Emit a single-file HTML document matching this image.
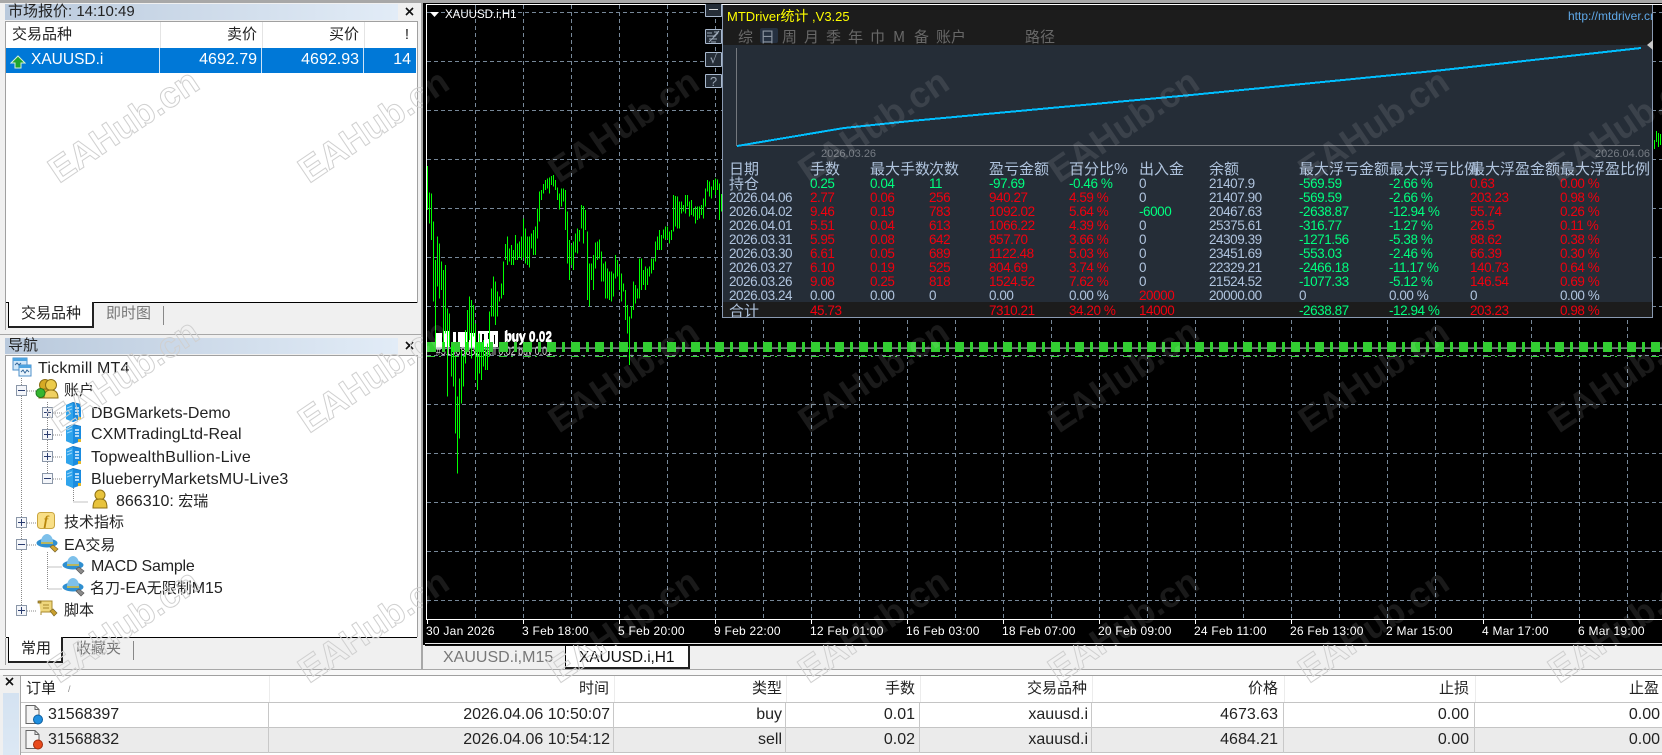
<!DOCTYPE html>
<html lang="zh">
<head>
<meta charset="utf-8">
<title>MT4</title>
<style>
html,body{margin:0;padding:0}
body{position:relative;width:1662px;height:755px;overflow:hidden;background:#f0f0f0;font-family:"Liberation Sans","Noto Sans CJK SC",sans-serif;font-size:16px;color:#222}
div,span,svg{box-sizing:border-box}
.a{position:absolute}
.t{position:absolute;white-space:nowrap;line-height:20px;height:20px}
.cj{font-size:15px}
.gray{color:#777}
.x{position:absolute;width:11px;height:11px}
.tab{position:absolute;background:#fff;border:1px solid #000;border-top:0;border-bottom:2px solid #222;border-right:2px solid #222}
#chart{position:absolute;left:423px;top:3px;width:1239px;height:642px;background:#000;overflow:hidden}
.lb{position:absolute;top:620px;color:#fff;font-size:12px;letter-spacing:.25px;line-height:16px;white-space:nowrap}
#panel{position:absolute;left:722px;top:5px;width:931px;height:313px;background:#252d37;border:1px solid #8a9ab2;border-top:0;overflow:hidden;color:#b0c4de;font-size:13.5px;letter-spacing:-.45px}
#panel .r{position:absolute;left:-722px;width:1700px;height:14px;line-height:14px}
#panel .r span{position:absolute;white-space:nowrap}
.c1{left:728px}.c2{left:809px}.c3{left:869px}.c4{left:928px}.c5{left:988px}.c6{left:1068px}.c7{left:1138px}.c8{left:1208px}.c9{left:1298px}.c10{left:1388px}.c11{left:1469px}.c12{left:1559px}
.g{color:#00ff7f}.d{color:#f0000f}
.h span,.cn{font-family:"WenQuanYi Zen Hei","Noto Sans CJK SC",sans-serif;font-size:15px;letter-spacing:0}
.pbtn{position:absolute;left:705px;width:17px;height:15px;background:#252d37;border:1px solid #a9b9ce;border-radius:1px;color:#9aa6b5;font-size:12px;line-height:13px;text-align:center}
.vl{position:absolute;background:#c8c8c8;width:1px}
.hl{position:absolute;background:#c4c4c4;height:1px;left:21px;width:1641px}
</style>
</head>
<body>
<!-- top strip -->
<div class="a" style="left:0;top:0;width:1662px;height:3px;background:#a8a8a8"></div>
<div class="a" style="left:421px;top:3px;width:2px;height:667px;background:#a8a8a8"></div>

<!-- MARKET WATCH -->
<div class="a" style="left:5px;top:4px;width:393px;height:16px;background:linear-gradient(90deg,#b9c9dc,#e2ecf7)"></div>
<div class="t" style="left:8px;top:2px;font-size:15px">市场报价: 14:10:49</div>
<svg class="x" style="left:404px;top:6px" viewBox="0 0 11 11"><path d="M2 2l7 7M9 2l-7 7" stroke="#111" stroke-width="1.6" fill="none"/></svg>
<div class="a" style="left:5px;top:21px;width:413px;height:282px;background:#fff;border:1px solid #a0a0a0;border-bottom:0"></div>
<div class="t cj" style="left:12px;top:25px">交易品种</div>
<div class="t cj" style="right:1405px;top:25px">卖价</div>
<div class="t cj" style="right:1303px;top:25px">买价</div>
<div class="t cj" style="right:1253px;top:25px">!</div>
<div class="a" style="left:160px;top:22px;width:1px;height:26px;background:#e4e4e4"></div>
<div class="a" style="left:262px;top:22px;width:1px;height:26px;background:#e4e4e4"></div>
<div class="a" style="left:364px;top:22px;width:1px;height:26px;background:#e4e4e4"></div>
<div class="a" style="left:6px;top:48px;width:410px;height:25px;background:#0078d7"></div>
<div class="a" style="left:159px;top:48px;width:1px;height:25px;background:#cfe3f6"></div>
<div class="a" style="left:261px;top:48px;width:1px;height:25px;background:#cfe3f6"></div>
<div class="a" style="left:363px;top:48px;width:1px;height:25px;background:#cfe3f6"></div>
<svg class="a" style="left:10px;top:55px" width="16" height="14" viewBox="0 0 16 14"><path d="M8 1L15 8H11V13H5V8H1Z" fill="#1fa52c" stroke="#d8f0d8" stroke-width="1"/></svg>
<div class="t" style="left:31px;top:50px;color:#fff;font-size:15.5px">XAUUSD.i</div>
<div class="t" style="right:1405px;top:50px;color:#fff">4692.79</div>
<div class="t" style="right:1303px;top:50px;color:#fff">4692.93</div>
<div class="t" style="right:1251px;top:50px;color:#fff">14</div>
<!-- MW tabs -->
<div class="a" style="left:6px;top:302px;width:411px;height:1px;background:#000"></div>
<div class="a" style="left:5px;top:303px;width:1px;height:27px;background:#a0a0a0"></div>
<div class="tab" style="left:8px;top:302px;width:86px;height:26px"></div>
<div class="t cj" style="left:21px;top:304px">交易品种</div>
<div class="t cj gray" style="left:106px;top:304px">即时图</div>
<div class="a" style="left:163px;top:306px;width:1px;height:19px;background:#888"></div>
<div class="a" style="left:0;top:334px;width:421px;height:1px;background:#a8a8a8"></div>

<!-- NAVIGATOR -->
<div class="a" style="left:5px;top:338px;width:393px;height:16px;background:linear-gradient(90deg,#b9c9dc,#e2ecf7)"></div>
<div class="t" style="left:8px;top:336px;font-size:15px">导航</div>
<svg class="x" style="left:404px;top:340px" viewBox="0 0 11 11"><path d="M2 2l7 7M9 2l-7 7" stroke="#111" stroke-width="1.6" fill="none"/></svg>
<div class="a" style="left:5px;top:355px;width:413px;height:282px;background:#fff;border:1px solid #a0a0a0;border-bottom:0"></div>

<svg class="a" style="left:0;top:0" width="420" height="640" viewBox="0 0 420 640">
<defs>
<g id="srv"><path d="M0 3L7 0L15 2V17L7 20L0 17Z" fill="#1272bd"/><path d="M0 3L7 1V20L0 17Z" fill="#2fa4ec"/><path d="M7 1L15 2.500V17L7 20Z" fill="#1a8ce0"/><path d="M1 6L6 4M1 9L6 7" stroke="#9ed6fb"/><path d="M9 6h4M9 9h4M9 12h4" stroke="#e2f4ff" stroke-width="1.4"/><path d="M12 15h3v3h-3z" fill="#e5b92c"/></g>
<g id="hat"><ellipse cx="10" cy="9" rx="10.500" ry="4.500" fill="#2f8fd0"/><path d="M4 8C4 2 8 0 10 0S16 2 16 8Z" fill="#7dc0ea"/><path d="M4 9h12" stroke="#e5c33a" stroke-width="1.5"/><path d="M13 13l3-2 5 4-3 3z" fill="#d3a52f" stroke="#77632b" stroke-width=".7"/></g>
<g id="hat2"><ellipse cx="10" cy="9" rx="10.500" ry="4.500" fill="#2f8fd0"/><path d="M4 8C4 2 8 0 10 0S16 2 16 8Z" fill="#7dc0ea"/><path d="M4 9h12" stroke="#e5c33a" stroke-width="1.5"/><path d="M13 13l3-2 5 4-3 3z" fill="#8b8b8b" stroke="#555" stroke-width=".7"/></g>
</defs>
<g stroke="#888" stroke-width="1" stroke-dasharray="1 1" fill="none" shape-rendering="crispEdges">
<path d="M21.5 378V612"/><path d="M47.5 402V480"/><path d="M73.5 488V502H88"/><path d="M47.5 552V589H62M47.5 567H62"/>
<path d="M27 391H36M53 413H62M53 435H62M53 457H62M53 479H62M27 523H36M27 545H36M27 611H36"/>
</g>
<g shape-rendering="crispEdges" fill="#f4f6fa" stroke="#8b97a8">
<rect x="16.5" y="385.5" width="10" height="10"/><rect x="42.5" y="407.5" width="10" height="10"/><rect x="42.5" y="429.5" width="10" height="10"/><rect x="42.5" y="451.5" width="10" height="10"/><rect x="42.5" y="473.5" width="10" height="10"/><rect x="16.5" y="517.5" width="10" height="10"/><rect x="16.5" y="539.5" width="10" height="10"/><rect x="16.5" y="605.5" width="10" height="10"/>
</g>
<path shape-rendering="crispEdges" stroke="#2a3c70" fill="none" d="M18 390.5h7M44 412.5h7M47.5 409v7M44 434.5h7M47.5 431v7M44 456.5h7M47.5 453v7M44 478.5h7M18 522.5h7M21.5 519v7M18 544.5h7M18 610.5h7M21.5 607v7"/>
<!-- root icon -->
<g transform="translate(13,358)"><rect x="0" y="0" width="14" height="12" fill="#cfe6f8" stroke="#4c8fc9"/><rect x="0" y="0" width="14" height="3" fill="#4ca3e0"/><rect x="6" y="7" width="12" height="11" fill="#eaf5fd" stroke="#4c8fc9"/><rect x="6" y="7" width="12" height="3" fill="#4ca3e0"/><path d="M8 14l2-2 2 3 2-3 2 2" stroke="#35689b" fill="none"/><path d="M2 7l2-2 2 2 2-2" stroke="#35689b" fill="none"/></g>
<!-- accounts -->
<g transform="translate(36,379)"><circle cx="9" cy="6" r="5.500" fill="#d6aa24" stroke="#8c6f14"/><circle cx="15" cy="6" r="5.500" fill="#eccb4a" stroke="#8c6f14"/><path d="M3 19C3 11 6 10 9 10S16 11 16 19Z" fill="#d4ab2a" stroke="#8c6f14"/><path d="M8 19C8 12 12 11 15 11S22 12 22 19Z" fill="#efd062" stroke="#8c6f14"/><circle cx="4.500" cy="14" r="4.500" fill="#35b52f" stroke="#1f7a1c"/></g>
<use href="#srv" x="66" y="402"/><use href="#srv" x="66" y="424"/><use href="#srv" x="66" y="446"/><use href="#srv" x="66" y="468"/>
<!-- user -->
<g transform="translate(92,490)"><circle cx="8" cy="5" r="5" fill="#e8c33c" stroke="#8c6f14"/><path d="M1 18C1 10 4 9 8 9S15 10 15 18Z" fill="#e8c33c" stroke="#8c6f14"/></g>
<!-- f -->
<g transform="translate(37,512)"><rect x=".5" y=".5" width="17" height="16" rx="3" fill="#f9df86" stroke="#c9a540"/><text x="9" y="13" text-anchor="middle" font-family="Liberation Serif,serif" font-style="italic" font-weight="bold" font-size="14" fill="#b8860b">f</text></g>
<use href="#hat" x="37" y="534"/>
<use href="#hat2" x="63" y="556"/><use href="#hat2" x="63" y="578"/>
<!-- script -->
<g transform="translate(37,600)"><path d="M2 1H15V12H4V15" fill="#efd77d" stroke="#a98a2c"/><path d="M1 1h3v2H1zM13 11l3-2 4 4-3 3z" fill="#c99f2f" stroke="#7d6722" stroke-width=".7"/><path d="M6 5h6M6 8h6" stroke="#a98a2c"/></g>
</svg>
<div class="t" style="left:38px;top:359px;letter-spacing:.2px">Tickmill MT4</div>
<div class="t cj" style="left:64px;top:381px">账户</div>
<div class="t" style="left:91px;top:404px">DBGMarkets-Demo</div>
<div class="t" style="left:91px;top:425px;letter-spacing:.05px">CXMTradingLtd-Real</div>
<div class="t" style="left:91px;top:448px;letter-spacing:.25px">TopwealthBullion-Live</div>
<div class="t" style="left:91px;top:470px;letter-spacing:.15px">BlueberryMarketsMU-Live3</div>
<div class="t" style="left:116px;top:492px">866310: <span class="cj">宏瑞</span></div>
<div class="t cj" style="left:64px;top:513px">技术指标</div>
<div class="t" style="left:64px;top:536px">EA<span class="cj">交易</span></div>
<div class="t" style="left:91px;top:557px;letter-spacing:-.2px">MACD Sample</div>
<div class="t" style="left:90px;top:579px"><span class="cj">名刀</span>-EA<span class="cj">无限制</span>M15</div>
<div class="t cj" style="left:64px;top:601px">脚本</div>
<!-- Nav tabs -->
<div class="a" style="left:6px;top:637px;width:411px;height:1px;background:#000"></div>
<div class="a" style="left:5px;top:638px;width:1px;height:27px;background:#a0a0a0"></div>
<div class="tab" style="left:8px;top:637px;width:55px;height:26px"></div>
<div class="t cj" style="left:21px;top:639px">常用</div>
<div class="t cj gray" style="left:76px;top:639px">收藏夹</div>
<div class="a" style="left:133px;top:641px;width:1px;height:19px;background:#888"></div>
<div class="a" style="left:0;top:669px;width:425px;height:1px;background:#a8a8a8"></div>

<!-- CHART -->
<div id="chart"></div>
<div class="a" style="left:426px;top:4px;width:1236px;height:1px;background:#fff"></div>
<div class="a" style="left:426px;top:4px;width:1px;height:616px;background:#fff"></div>
<div class="a" style="left:426px;top:619px;width:1236px;height:1px;background:#fff"></div>
<div class="a" style="left:425px;top:643px;width:1237px;height:1px;background:#e8e8e8"></div>
<svg class="a" style="left:0;top:0" width="1662" height="755" viewBox="0 0 1662 755">
<defs><pattern id="sq" x="427" y="342" width="24" height="10" patternUnits="userSpaceOnUse"><rect x="0" y="0" width="9" height="10" fill="#32cd32"/><rect x="15" y="0" width="3" height="10" fill="#32cd32"/></pattern></defs>
<g stroke="#778899" stroke-dasharray="4 3" shape-rendering="crispEdges" fill="none">
<path d="M427 12.5H1662M427 61.5H1662M427 110.5H1662M427 159.5H1662M427 208.5H1662M427 257.5H1662M427 306.5H1662M427 404.5H1662M427 453.5H1662M427 502.5H1662M427 551.5H1662M427 600.5H1662"/>
<path d="M475.5 5V619M523.5 5V619M571.5 5V619M619.5 5V619M667.5 5V619M715.5 5V619M763.5 5V619M811.5 5V619M859.5 5V619M907.5 5V619M955.5 5V619M1003.5 5V619M1051.5 5V619M1099.5 5V619M1147.5 5V619M1195.5 5V619M1243.5 5V619M1291.5 5V619M1339.5 5V619M1387.5 5V619M1435.5 5V619M1483.5 5V619M1531.5 5V619M1579.5 5V619M1627.5 5V619"/>
</g>
<path stroke="#fff" shape-rendering="crispEdges" d="M427.5 619V624M523.5 619V624M619.5 619V624M715.5 619V624M811.5 619V624M907.5 619V624M1003.5 619V624M1099.5 619V624M1195.5 619V624M1291.5 619V624M1387.5 619V624M1483.5 619V624M1579.5 619V624"/>
<g fill="#fff" shape-rendering="crispEdges">
<rect x="436" y="333" width="6" height="16"/><rect x="443" y="331" width="7" height="16"/><rect x="453" y="332" width="3" height="15"/><rect x="458" y="332" width="9" height="15"/><rect x="469" y="333" width="6" height="15"/><rect x="478" y="331" width="20" height="16"/>
</g>
<g fill="#000" shape-rendering="crispEdges"><rect x="482" y="334" width="2" height="8"/><rect x="488" y="333" width="2" height="6"/><rect x="494" y="335" width="1" height="9"/></g>
<g fill="#fff" font-family="Liberation Sans,sans-serif" font-size="15" font-weight="bold">
<text x="504" y="342" textLength="48" lengthAdjust="spacingAndGlyphs">buy 0.02</text>
<text x="505" y="341" textLength="47" lengthAdjust="spacingAndGlyphs">buy 0.02</text>
</g>
<text x="436" y="355" fill="#ddd" font-family="Liberation Sans,sans-serif" font-size="12" textLength="116" lengthAdjust="spacingAndGlyphs">#31568832 sell 0.02 buy 0.01</text>
<rect x="427" y="347.5" width="1235" height="1.2" fill="#aab"/>
<rect x="427" y="342" width="1235" height="10" fill="url(#sq)"/>
<path d="M427 356.5H1662" stroke="#32cd32" stroke-dasharray="8 4 2 10" shape-rendering="crispEdges"/>
<path d="M427 355.5H1662" stroke="#778899" stroke-dasharray="4 3" shape-rendering="crispEdges"/>
<path d="M430 12h9l-4.500 5z" fill="#fff"/>
</svg>
<svg class="a" style="left:425px;top:170px;overflow:visible" width="300" height="320" viewBox="0 0 900 960">
<path fill="none" stroke="#00ff00" stroke-width="3" shape-rendering="crispEdges" d="M7.500 -12V120M13.500 68V160M19.500 70V210M25.500 155V395M31.500 270V520M37.500 200V350M43.500 220V385M49.500 275V360M55.500 300V530M61.500 285V490M67.500 415V680M73.500 430V530M79.500 530V620M85.500 530V650M91.500 560V790M97.500 680V910M103.500 625V805M109.500 540V700M115.500 560V650M121.500 480V580M127.500 420V540M133.500 380V510M139.500 390V565M145.500 405V500M151.500 460V630M157.500 520V660M163.500 490V610M169.500 520V630M175.500 510V590M181.500 530V600M187.500 520V600M193.500 425V560M199.500 355V440M205.500 320V440M211.500 335V465M217.500 365V440M223.500 380V395M229.500 340V385M235.500 275V375M241.500 222V270M247.500 200V285M253.500 235V275M259.500 225V285M265.500 240V285M271.500 195V270M277.500 220V270M283.500 215V262M289.500 200V270M295.500 145V262M301.500 175V280M307.500 200V285M313.500 200V292M319.500 190V235M325.500 180V255M331.500 170V255M337.500 115V205M343.500 65V155M349.500 60V90M355.500 42V70M361.500 30V60M367.500 25V55M373.500 22V70M379.500 18V45M385.500 15V50M391.500 30V60M397.500 52V90M403.500 70V118M409.500 55V110M415.500 55V95M421.500 60V180M427.500 125V280M433.500 210V330M439.500 225V285M445.500 215V300M451.500 190V248M457.500 175V250M463.500 180V215M469.500 105V175M475.500 108V220M481.500 120V180M487.500 185V390M493.500 280V410M499.500 280V330M505.500 255V360M511.500 218V295M517.500 215V270M523.500 208V265M529.500 245V335M535.500 280V335M541.500 275V385M547.500 295V385M553.500 305V390M559.500 305V395M565.500 310V380M571.500 255V325M577.500 270V320M583.500 290V360M589.500 310V395M595.500 340V365M601.500 360V450M607.500 405V490M613.500 440V585M619.500 410V445M625.500 335V420M631.500 345V400M637.500 355V385M643.500 265V385M649.500 265V360M655.500 300V345M661.500 290V360M667.500 295V345M673.500 290V320M679.500 265V310M685.500 265V300M691.500 215V275M697.500 200V240M703.500 180V240M709.500 195V240M715.500 178V205M721.500 170V210M727.500 170V205M733.500 185V220M739.500 180V210M745.500 75V185M751.500 78V170M757.500 80V175M763.500 95V175M769.500 95V130M775.500 105V125M781.500 75V130M787.500 75V110M793.500 95V140M799.500 90V135M805.500 115V140M811.500 110V160M817.500 110V150M823.500 110V145M829.500 105V135M835.500 85V145M841.500 55V110M847.500 30V65M853.500 35V80M859.500 50V85M865.500 30V60M871.500 25V75M877.500 28V60M883.500 40V150M889.500 72V125"/>
</svg>
<svg class="a" style="left:1653px;top:125px" width="9" height="30" viewBox="0 0 9 30"><path stroke="#00ff00" shape-rendering="crispEdges" d="M1.500 15V24M3.500 6V17M5.500 8V22M7.500 9V20"/></svg>
<div class="t" style="left:445px;top:5px;color:#fff;font-size:11.5px">XAUUSD.i,H1</div>

<!-- side buttons -->
<div class="pbtn" style="top:4px;height:13px;border-top:0"><span class="a" style="left:3px;top:5px;width:9px;height:1px;background:#ddd"></span></div>
<div class="pbtn" style="top:29px"><svg width="15" height="13" viewBox="0 0 15 13" style="display:block"><path d="M1 3h5M1 6h9M3 9h8M5 12h5M8 2l5 0M7 7l6-6M3 12l9-9" stroke="#9aa6b5" fill="none"/></svg></div>
<div class="pbtn" style="top:52px;font-family:'DejaVu Sans',sans-serif">√</div>
<div class="pbtn" style="top:74px;font-size:13px;height:14px">?</div>

<!-- STATS PANEL -->
<div id="panel">
<div class="a" style="left:0;top:0;width:930px;height:40px;background:#1c1c1c"></div>
<div class="a" style="left:0;top:297px;width:930px;height:15px;background:#1c1c1c"></div>
<div class="a" style="left:37px;top:23px;width:18px;height:15px;background:#253040;border-radius:2px"></div>
<div class="a" style="left:4px;top:3px;color:#ffff00;font-size:13px;letter-spacing:0;line-height:16px;white-space:nowrap">MTDriver<span class="cn" style="font-size:14px">统计</span> ,V3.25</div>
<div class="a" style="left:845px;top:3px;color:#5fa8e8;font-size:12px;letter-spacing:0;line-height:16px;white-space:nowrap">http://mtdriver.cn</div>
<div class="a cn" style="left:15px;top:24px;color:#686868;line-height:16px">综</div>
<div class="a cn" style="left:37px;top:24px;color:#8a93a0;line-height:16px">日</div>
<div class="a cn" style="left:59px;top:24px;color:#686868;line-height:16px">周</div>
<div class="a cn" style="left:81px;top:24px;color:#686868;line-height:16px">月</div>
<div class="a cn" style="left:103px;top:24px;color:#686868;line-height:16px">季</div>
<div class="a cn" style="left:125px;top:24px;color:#686868;line-height:16px">年</div>
<div class="a cn" style="left:147px;top:24px;color:#686868;line-height:16px">巾</div>
<div class="a cn" style="left:170px;top:24px;color:#686868;line-height:16px">M</div>
<div class="a cn" style="left:191px;top:24px;color:#686868;line-height:16px">备</div>
<div class="a cn" style="left:213px;top:24px;color:#686868;line-height:16px">账户</div>
<div class="a cn" style="left:302px;top:24px;color:#686868;line-height:16px">路径</div>
<svg class="a" style="left:-722px;top:-5px" width="1662" height="200" viewBox="0 0 1662 200">
<path d="M735.500 48V145.500H1639" fill="none" stroke="#74787e" shape-rendering="crispEdges"/>
<polyline points="736,146 843,128 910,121 1190,95 1433,71 1640,48" fill="none" stroke="#00bfff" stroke-width="2" shape-rendering="crispEdges"/>
<text x="820" y="157" font-family="Liberation Sans,sans-serif" font-size="11" letter-spacing="0" fill="#757b83">2026.03.26</text>
<text x="1594" y="157" font-family="Liberation Sans,sans-serif" font-size="11" letter-spacing="0" fill="#757b83">2026.04.06</text>
</svg>
<div class="r h" style="top:157px"><span class="c1">日期</span><span class="c2">手数</span><span class="c3">最大手数</span><span class="c4">次数</span><span class="c5">盈亏金额</span><span class="c6">百分比%</span><span class="c7">出入金</span><span class="c8">余额</span><span class="c9">最大浮亏金额</span><span class="c10">最大浮亏比例</span><span class="c11">最大浮盈金额</span><span class="c12">最大浮盈比例</span></div>
<div class="r" style="top:172px"><span class="c1 cn">持仓</span><span class="c2 g">0.25</span><span class="c3 g">0.04</span><span class="c4 g">11</span><span class="c5 g">-97.69</span><span class="c6 g">-0.46 %</span><span class="c7">0</span><span class="c8">21407.9</span><span class="c9 g">-569.59</span><span class="c10 g">-2.66 %</span><span class="c11 d">0.63</span><span class="c12 d">0.00 %</span></div>
<div class="r" style="top:186px"><span class="c1">2026.04.06</span><span class="c2 d">2.77</span><span class="c3 d">0.06</span><span class="c4 d">256</span><span class="c5 d">940.27</span><span class="c6 d">4.59 %</span><span class="c7">0</span><span class="c8">21407.90</span><span class="c9 g">-569.59</span><span class="c10 g">-2.66 %</span><span class="c11 d">203.23</span><span class="c12 d">0.98 %</span></div>
<div class="r" style="top:200px"><span class="c1">2026.04.02</span><span class="c2 d">9.46</span><span class="c3 d">0.19</span><span class="c4 d">783</span><span class="c5 d">1092.02</span><span class="c6 d">5.64 %</span><span class="c7 g">-6000</span><span class="c8">20467.63</span><span class="c9 g">-2638.87</span><span class="c10 g">-12.94 %</span><span class="c11 d">55.74</span><span class="c12 d">0.26 %</span></div>
<div class="r" style="top:214px"><span class="c1">2026.04.01</span><span class="c2 d">5.51</span><span class="c3 d">0.04</span><span class="c4 d">613</span><span class="c5 d">1066.22</span><span class="c6 d">4.39 %</span><span class="c7">0</span><span class="c8">25375.61</span><span class="c9 g">-316.77</span><span class="c10 g">-1.27 %</span><span class="c11 d">26.5</span><span class="c12 d">0.11 %</span></div>
<div class="r" style="top:228px"><span class="c1">2026.03.31</span><span class="c2 d">5.95</span><span class="c3 d">0.08</span><span class="c4 d">642</span><span class="c5 d">857.70</span><span class="c6 d">3.66 %</span><span class="c7">0</span><span class="c8">24309.39</span><span class="c9 g">-1271.56</span><span class="c10 g">-5.38 %</span><span class="c11 d">88.62</span><span class="c12 d">0.38 %</span></div>
<div class="r" style="top:242px"><span class="c1">2026.03.30</span><span class="c2 d">6.61</span><span class="c3 d">0.05</span><span class="c4 d">689</span><span class="c5 d">1122.48</span><span class="c6 d">5.03 %</span><span class="c7">0</span><span class="c8">23451.69</span><span class="c9 g">-553.03</span><span class="c10 g">-2.46 %</span><span class="c11 d">66.39</span><span class="c12 d">0.30 %</span></div>
<div class="r" style="top:256px"><span class="c1">2026.03.27</span><span class="c2 d">6.10</span><span class="c3 d">0.19</span><span class="c4 d">525</span><span class="c5 d">804.69</span><span class="c6 d">3.74 %</span><span class="c7">0</span><span class="c8">22329.21</span><span class="c9 g">-2466.18</span><span class="c10 g">-11.17 %</span><span class="c11 d">140.73</span><span class="c12 d">0.64 %</span></div>
<div class="r" style="top:270px"><span class="c1">2026.03.26</span><span class="c2 d">9.08</span><span class="c3 d">0.25</span><span class="c4 d">818</span><span class="c5 d">1524.52</span><span class="c6 d">7.62 %</span><span class="c7">0</span><span class="c8">21524.52</span><span class="c9 g">-1077.33</span><span class="c10 g">-5.12 %</span><span class="c11 d">146.54</span><span class="c12 d">0.69 %</span></div>
<div class="r" style="top:284px"><span class="c1">2026.03.24</span><span class="c2">0.00</span><span class="c3">0.00</span><span class="c4">0</span><span class="c5">0.00</span><span class="c6">0.00 %</span><span class="c7 d">20000</span><span class="c8">20000.00</span><span class="c9">0</span><span class="c10">0.00 %</span><span class="c11">0</span><span class="c12">0.00 %</span></div>
<div class="r" style="top:299px"><span class="c1 cn">合计</span><span class="c2 d">45.73</span><span class="c5 d">7310.21</span><span class="c6 d">34.20 %</span><span class="c7 d">14000</span><span class="c9 g">-2638.87</span><span class="c10 g">-12.94 %</span><span class="c11 d">203.23</span><span class="c12 d">0.98 %</span></div>
</div>
<svg class="a" style="left:1646px;top:40px" width="7" height="10" viewBox="0 0 7 10"><path d="M7 0V10L1 5Z" fill="#c8c8c8"/></svg>

<!-- time labels -->
<div class="lb" style="left:426px;top:623px">30 Jan 2026</div>
<div class="lb" style="left:522px;top:623px">3 Feb 18:00</div>
<div class="lb" style="left:618px;top:623px">5 Feb 20:00</div>
<div class="lb" style="left:714px;top:623px">9 Feb 22:00</div>
<div class="lb" style="left:810px;top:623px">12 Feb 01:00</div>
<div class="lb" style="left:906px;top:623px">16 Feb 03:00</div>
<div class="lb" style="left:1002px;top:623px">18 Feb 07:00</div>
<div class="lb" style="left:1098px;top:623px">20 Feb 09:00</div>
<div class="lb" style="left:1194px;top:623px">24 Feb 11:00</div>
<div class="lb" style="left:1290px;top:623px">26 Feb 13:00</div>
<div class="lb" style="left:1386px;top:623px">2 Mar 15:00</div>
<div class="lb" style="left:1482px;top:623px">4 Mar 17:00</div>
<div class="lb" style="left:1578px;top:623px">6 Mar 19:00</div>

<!-- chart tabs -->
<div class="a" style="left:425px;top:645px;width:1237px;height:1px;background:#111"></div>
<div class="t gray" style="left:443px;top:648px;font-size:16px">XAUUSD.i,M15</div>
<div class="tab" style="left:565px;top:645px;width:125px;height:24px;border-top:1px solid #000"></div>
<div class="t" style="left:579px;top:648px;font-size:15.500px;letter-spacing:-.1px;color:#111">XAUUSD.i,H1</div>

<!-- TERMINAL -->
<div class="a" style="left:425px;top:669px;width:1237px;height:1px;background:#a8a8a8"></div>
<div class="a" style="left:0;top:670px;width:1662px;height:5px;background:#f8f8f8"></div>
<div class="a" style="left:3px;top:675px;width:1659px;height:1px;background:#a0a0a0"></div>
<div class="a" style="left:3px;top:693px;width:16px;height:62px;background:linear-gradient(180deg,#d4e2f1,#dce8f4)"></div>
<svg class="x" style="left:4px;top:676px" viewBox="0 0 11 11"><path d="M2 2l7 7M9 2l-7 7" stroke="#111" stroke-width="1.6" fill="none"/></svg>
<div class="a" style="left:21px;top:676px;width:1641px;height:79px;background:#fff"></div>
<div class="a" style="left:21px;top:728px;width:1641px;height:25px;background:#ebebeb"></div>
<div class="hl" style="top:702px"></div>
<div class="hl" style="top:727px"></div>
<div class="hl" style="top:752px"></div>
<div class="a" style="left:20px;top:676px;width:1px;height:79px;background:#a8a8a8"></div>
<div class="vl" style="left:269px;top:676px;height:26px;background:#ececec"></div>
<div class="vl" style="left:614px;top:676px;height:26px;background:#ececec"></div>
<div class="vl" style="left:786px;top:676px;height:26px;background:#ececec"></div>
<div class="vl" style="left:920px;top:676px;height:26px;background:#ececec"></div>
<div class="vl" style="left:1092px;top:676px;height:26px;background:#ececec"></div>
<div class="vl" style="left:1284px;top:676px;height:26px;background:#ececec"></div>
<div class="vl" style="left:1475px;top:676px;height:26px;background:#ececec"></div>
<div class="vl" style="left:268px;top:703px;height:50px"></div>
<div class="vl" style="left:613px;top:703px;height:50px"></div>
<div class="vl" style="left:785px;top:703px;height:50px"></div>
<div class="vl" style="left:919px;top:703px;height:50px"></div>
<div class="vl" style="left:1091px;top:703px;height:50px"></div>
<div class="vl" style="left:1283px;top:703px;height:50px"></div>
<div class="vl" style="left:1474px;top:703px;height:50px"></div>
<div class="t cj" style="left:26px;top:679px">订单</div>
<div class="t" style="left:68px;top:679px;font-size:9px;color:#888">/</div>
<div class="t cj" style="right:1053px;top:679px">时间</div>
<div class="t cj" style="right:880px;top:679px">类型</div>
<div class="t cj" style="right:747px;top:679px">手数</div>
<div class="t cj" style="right:575px;top:679px">交易品种</div>
<div class="t cj" style="right:384px;top:679px">价格</div>
<div class="t cj" style="right:193px;top:679px">止损</div>
<div class="t cj" style="right:3px;top:679px">止盈</div>
<svg class="a" style="left:24px;top:705px" width="20" height="20" viewBox="0 0 20 20"><path d="M2 .5H11L15 4.500V18.500H2Z" fill="#f4f4f4" stroke="#666"/><path d="M11 .5V4.500H15" fill="none" stroke="#666"/><circle cx="14" cy="14.500" r="4.500" fill="#1f8fe0" stroke="#0d5f9f"/></svg>
<svg class="a" style="left:24px;top:730px" width="20" height="20" viewBox="0 0 20 20"><path d="M2 .5H11L15 4.500V18.500H2Z" fill="#f4f4f4" stroke="#666"/><path d="M11 .5V4.500H15" fill="none" stroke="#666"/><circle cx="14" cy="14.500" r="4.500" fill="#e84a1c" stroke="#9f2d0d"/></svg>
<div class="t" style="left:48px;top:705px">31568397</div>
<div class="t" style="right:1052px;top:705px">2026.04.06 10:50:07</div>
<div class="t" style="right:880px;top:705px">buy</div>
<div class="t" style="right:747px;top:705px">0.01</div>
<div class="t" style="right:574px;top:705px">xauusd.i</div>
<div class="t" style="right:384px;top:705px">4673.63</div>
<div class="t" style="right:193px;top:705px">0.00</div>
<div class="t" style="right:2px;top:705px">0.00</div>
<div class="t" style="left:48px;top:730px">31568832</div>
<div class="t" style="right:1052px;top:730px">2026.04.06 10:54:12</div>
<div class="t" style="right:880px;top:730px">sell</div>
<div class="t" style="right:747px;top:730px">0.02</div>
<div class="t" style="right:574px;top:730px">xauusd.i</div>
<div class="t" style="right:384px;top:730px">4684.21</div>
<div class="t" style="right:193px;top:730px">0.00</div>
<div class="t" style="right:2px;top:730px">0.00</div>

<!-- WATERMARK -->
<svg class="a" style="left:0;top:0;pointer-events:none" width="1662" height="755" viewBox="0 0 1662 755">
<defs>
<clipPath id="cd"><rect x="427" y="5" width="1235" height="640"/></clipPath>
<clipPath id="cl"><rect x="0" y="0" width="423" height="755"/><rect x="423" y="645" width="1239" height="110"/></clipPath>
</defs>
<g clip-path="url(#cd)" font-family="Liberation Sans,sans-serif" font-weight="bold" font-size="36" text-anchor="middle" fill="#fff" fill-opacity=".1">
<text transform="translate(373,125) rotate(-34)" y="13">EAHub.cn</text><text transform="translate(623,125) rotate(-34)" y="13">EAHub.cn</text><text transform="translate(873,125) rotate(-34)" y="13">EAHub.cn</text><text transform="translate(1123,125) rotate(-34)" y="13">EAHub.cn</text><text transform="translate(1373,125) rotate(-34)" y="13">EAHub.cn</text><text transform="translate(1623,125) rotate(-34)" y="13">EAHub.cn</text>
<text transform="translate(373,375) rotate(-34)" y="13">EAHub.cn</text><text transform="translate(623,375) rotate(-34)" y="13">EAHub.cn</text><text transform="translate(873,375) rotate(-34)" y="13">EAHub.cn</text><text transform="translate(1123,375) rotate(-34)" y="13">EAHub.cn</text><text transform="translate(1373,375) rotate(-34)" y="13">EAHub.cn</text><text transform="translate(1623,375) rotate(-34)" y="13">EAHub.cn</text>
<text transform="translate(373,625) rotate(-34)" y="13">EAHub.cn</text><text transform="translate(623,625) rotate(-34)" y="13">EAHub.cn</text><text transform="translate(873,625) rotate(-34)" y="13">EAHub.cn</text><text transform="translate(1123,625) rotate(-34)" y="13">EAHub.cn</text><text transform="translate(1373,625) rotate(-34)" y="13">EAHub.cn</text><text transform="translate(1623,625) rotate(-34)" y="13">EAHub.cn</text>
</g>
<g clip-path="url(#cl)" font-family="Liberation Sans,sans-serif" font-weight="bold" font-size="36" text-anchor="middle" fill="none" stroke="#d0d0d0" stroke-width="1">
<text transform="translate(123,125) rotate(-34)" y="13">EAHub.cn</text><text transform="translate(373,125) rotate(-34)" y="13">EAHub.cn</text>
<text transform="translate(123,375) rotate(-34)" y="13">EAHub.cn</text><text transform="translate(373,375) rotate(-34)" y="13">EAHub.cn</text>
<text transform="translate(123,625) rotate(-34)" y="13">EAHub.cn</text><text transform="translate(373,625) rotate(-34)" y="13">EAHub.cn</text><text transform="translate(623,625) rotate(-34)" y="13">EAHub.cn</text><text transform="translate(873,625) rotate(-34)" y="13">EAHub.cn</text><text transform="translate(1123,625) rotate(-34)" y="13">EAHub.cn</text><text transform="translate(1373,625) rotate(-34)" y="13">EAHub.cn</text><text transform="translate(1623,625) rotate(-34)" y="13">EAHub.cn</text>
</g>
</svg>
</body>
</html>
